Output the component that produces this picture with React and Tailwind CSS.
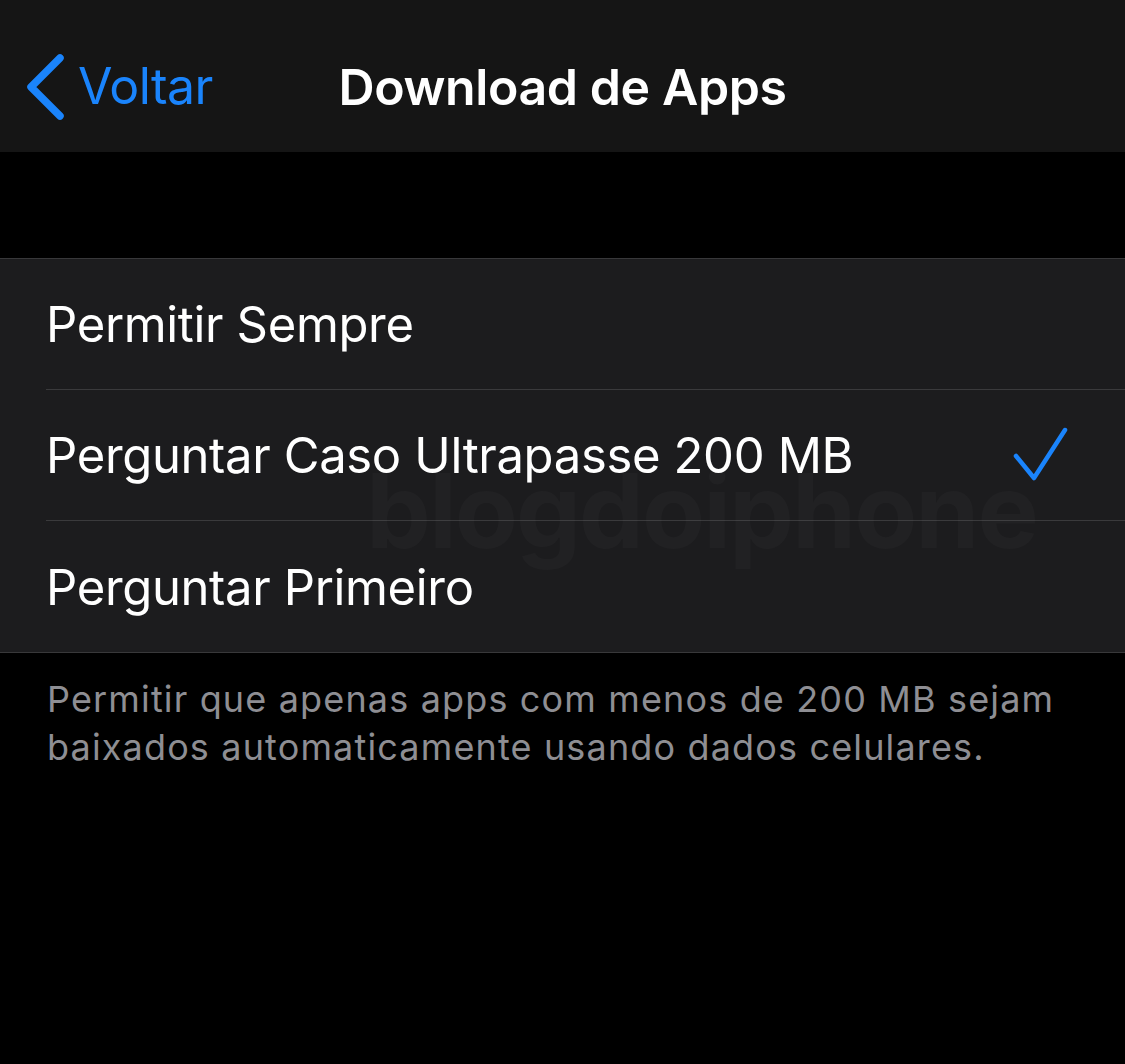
import React from 'react';

const options = [
    { label: 'Permitir Sempre', checked: false },
    { label: 'Perguntar Caso Ultrapasse 200 MB', checked: true },
    { label: 'Perguntar Primeiro', checked: false },
];

const App = () => {
    return (
        <div className="min-h-[1064px] bg-black font-['Inter','Liberation_Sans',sans-serif] antialiased">
            {/* Nav bar */}
            <div className="h-[152px] pt-[22px] bg-[#151515] grid grid-cols-[1fr_auto_1fr] items-center">
                <button className="flex items-center gap-[12px] pl-[26px] text-[#1a84fc] justify-self-start">
                    <svg width="40" height="66" viewBox="0 0 40 66" fill="none">
                        <path d="M34 4 L5 33 L34 62" stroke="currentColor" strokeWidth="7.5" strokeLinecap="round" strokeLinejoin="round" />
                    </svg>
                    <span className="text-[50px] leading-none tracking-[-0.6px] pb-[2px]">Voltar</span>
                </button>
                <h1 className="text-[50px] leading-none font-semibold text-white tracking-[-0.4px]">Download de Apps</h1>
                <div />
            </div>

            <div className="h-[106px]" />

            {/* Options list */}
            <div className="relative bg-[#1c1c1e] border-t border-b border-[#38383a]">
                {options.map((opt, i) => (
                    <div key={opt.label} className="pl-[46px]">
                        <div
                            className={`h-[131px] flex items-center justify-between pr-[54px] ${
                                i < options.length - 1 ? 'border-b border-[#3a3a3c]' : ''
                            }`}
                        >
                            <span className="text-white text-[49px] leading-none tracking-[-0.35px] pt-[1px]">{opt.label}</span>
                            {opt.checked && (
                                <svg width="60" height="60" viewBox="0 0 60 60" fill="none" className="text-[#1a84fc]">
                                    <path d="M5 31 L23 53 L54 5" stroke="currentColor" strokeWidth="4.5" strokeLinecap="round" strokeLinejoin="round" />
                                </svg>
                            )}
                        </div>
                    </div>
                ))}
                {/* watermark */}
                <div className="pointer-events-none absolute left-[366px] top-[200px] text-[103px] leading-none font-bold text-white/[0.025] tracking-[-2px]">
                    blogdoiphone
                </div>
            </div>

            {/* Footer note */}
            <p className="px-[47px] pt-[22px] text-[36px] leading-[48px] text-[#8e8e93] tracking-[1.15px]">
                Permitir que apenas apps com menos de 200 MB sejam
                <br />
                baixados automaticamente usando dados celulares.
            </p>
        </div>
    );
};

export default App;
